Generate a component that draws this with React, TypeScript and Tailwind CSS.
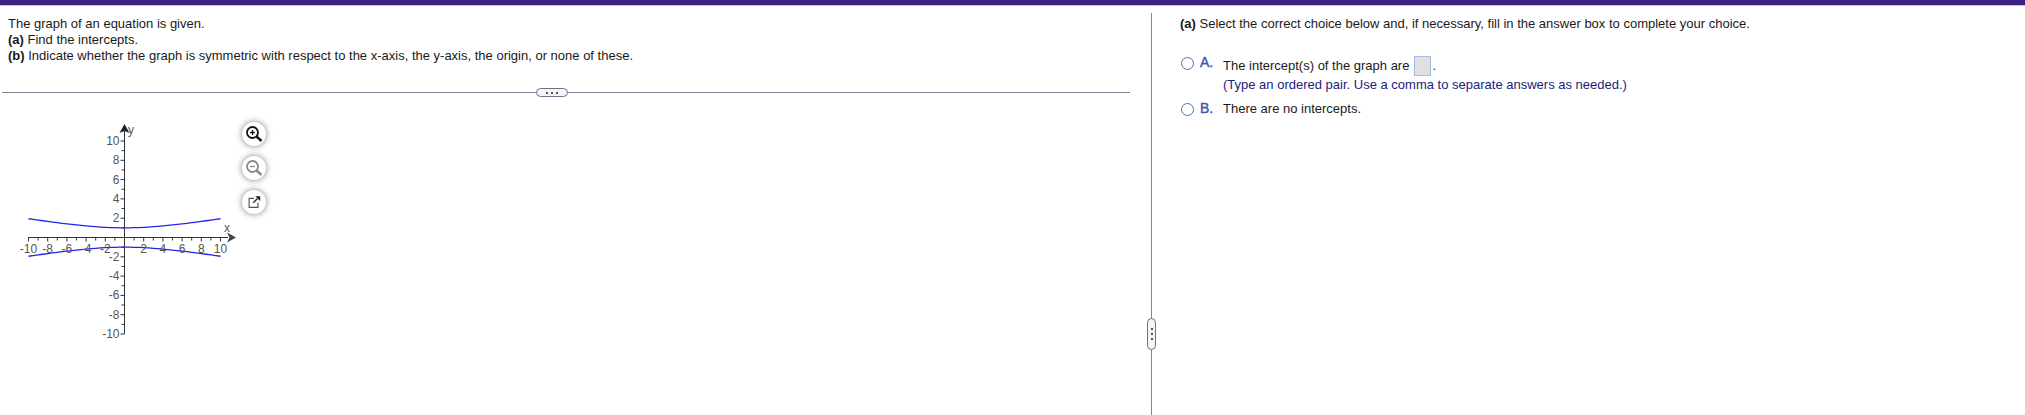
import React from 'react';

const xTicks = Array.from({ length: 21 }, (_, i) => i - 10);
const xLabels = [-10, -8, -6, -4, -2, 2, 4, 6, 8, 10];
const yLabels = [10, 8, 6, 4, 2, -2, -4, -6, -8, -10];

const cx = 124.5;
const cy = 128.5;
const unitX = 9.6;
const unitY = 9.65;

const curve = (sign: number) =>
  Array.from({ length: 41 }, (_, i) => {
    const x = -10 + i / 2;
    const y = sign * Math.sqrt(1 + (x * x) / 36);
    return `${cx + x * unitX},${cy - y * unitY}`;
  }).join(' ');

function Graph() {
  return (
    <svg width="240" height="240" viewBox="0 0 240 240" className="block">
      <g stroke="#333" strokeWidth="1">
        <line x1="28" y1={cy} x2="228" y2={cy} />
        <line x1={cx} y1="22" x2={cx} y2="225" />
        {xTicks.map((t) => (
          <line key={t} x1={cx + t * unitX} y1={cy} x2={cx + t * unitX} y2={cy + (t % 2 === 0 ? 4 : 3)} />
        ))}
        {xTicks.map((t) => (
          <line key={t} x1={cx - (t % 2 === 0 ? 4 : 3)} y1={cy - t * unitY} x2={cx} y2={cy - t * unitY} />
        ))}
      </g>
      <polygon points="236,128.5 227,123.5 229.5,128.5 227,133.5" fill="#444" />
      <polygon points="124.5,15 119.5,24 124.5,22 129.5,24" fill="#222" />
      <polyline points={curve(1)} fill="none" stroke="#2222ee" strokeWidth="1.3" />
      <polyline points={curve(-1)} fill="none" stroke="#2222ee" strokeWidth="1.3" />
      <g fontFamily="Liberation Sans, Arial, sans-serif" fontSize="12" fill="#555">
        {xLabels.map((t) => (
          <text key={t} x={cx + t * unitX} y={cy + 15} textAnchor="middle">
            {t}
          </text>
        ))}
        {yLabels.map((t) => (
          <text key={t} x={cx - 5} y={cy - t * unitY + 4} textAnchor="end">
            {t}
          </text>
        ))}
        <text x="227" y="123" textAnchor="middle">x</text>
        <text x="131" y="25" textAnchor="middle">y</text>
      </g>
    </svg>
  );
}

function ToolButton({ children }: { children: React.ReactNode }) {
  return (
    <button className="flex h-[24px] w-[24px] items-center justify-center rounded-full bg-white shadow-[0_0_6px_rgba(0,0,0,0.5)]">
      {children}
    </button>
  );
}

function ZoomIcon({ color, plus }: { color: string; plus?: boolean }) {
  return (
    <svg width="18" height="18" viewBox="0 0 18 18" fill="none" stroke={color}>
      <circle cx="7.5" cy="7.5" r="5.5" strokeWidth="1.8" />
      <line x1="11.5" y1="11.5" x2="16.5" y2="16" strokeWidth="2.4" />
      <line x1="5" y1="7.5" x2="10" y2="7.5" strokeWidth="1.3" />
      {plus && <line x1="7.5" y1="5" x2="7.5" y2="10" strokeWidth="1.3" />}
    </svg>
  );
}

function PopoutIcon() {
  return (
    <svg width="16" height="16" viewBox="0 0 18 18" fill="none">
      <path d="M9 5H3.5v10h10V9.5" stroke="#555" strokeWidth="1.3" />
      <line x1="8" y1="10" x2="13" y2="5" stroke="#222" strokeWidth="1.5" />
      <polygon points="10.5,2.5 16,2.5 16,8" fill="#222" />
    </svg>
  );
}

function Choice({ letter, children }: { letter: string; children: React.ReactNode }) {
  return (
    <div className="flex items-start">
      <span className="mt-[3px] h-[13px] w-[13px] rounded-full border-[1.5px] border-[#4f6fb8] bg-white" />
      <span className="ml-[6px] w-[23px] text-[14px] text-[#3f55b0] [-webkit-text-stroke:0.4px_#3f55b0]">{letter}</span>
      <div>{children}</div>
    </div>
  );
}

export default function App() {
  return (
    <div className="h-[415px] w-[2025px] overflow-hidden bg-white font-['Liberation_Sans',Arial,sans-serif] text-[13px] leading-[16px] text-[#1a1a1a]">
      <div className="h-[6px] border-b border-[#c9c3e3] bg-[#3b2080]" />

      <div className="flex h-[409px]">
        {/* Question pane */}
        <div className="w-[1130px] pt-[10px]">
          <div className="pl-[8px]">
            <p>The graph of an equation is given.</p>
            <p>
              <b>(a)</b> Find the intercepts.
            </p>
            <p>
              <b>(b)</b> Indicate whether the graph is symmetric with respect to the x-axis, the y-axis, the origin, or none of these.
            </p>
          </div>

          <div className="relative ml-[2px] mt-[28px] h-px bg-[#7f8796]">
            <div className="absolute left-[534px] top-[-4px] flex h-[9px] w-[32px] items-center justify-center gap-[3px] rounded-full border border-[#6b7585] bg-[#f3f5f8]">
              <span className="h-[2px] w-[2px] bg-[#555]" />
              <span className="h-[2px] w-[2px] bg-[#555]" />
              <span className="h-[2px] w-[2px] bg-[#555]" />
            </div>
          </div>

          <div className="mt-[16px] flex">
            <Graph />
            <div className="ml-[2px] mt-[13px] flex flex-col gap-[10px]">
              <ToolButton>
                <ZoomIcon color="#111" plus />
              </ToolButton>
              <ToolButton>
                <ZoomIcon color="#8a8a8a" />
              </ToolButton>
              <ToolButton>
                <PopoutIcon />
              </ToolButton>
            </div>
          </div>
        </div>

        {/* Divider */}
        <div className="relative ml-[21px] mt-[7px] w-px bg-[#7f8796]">
          <div className="absolute left-[-4px] top-[305px] flex h-[32px] w-[9px] flex-col items-center justify-center gap-[3px] rounded-full border border-[#6b7585] bg-[#f3f5f8]">
            <span className="h-[2px] w-[2px] bg-[#555]" />
            <span className="h-[2px] w-[2px] bg-[#555]" />
            <span className="h-[2px] w-[2px] bg-[#555]" />
          </div>
        </div>

        {/* Answer pane */}
        <div className="pl-[28px] pt-[10px]">
          <p>
            <b>(a)</b> Select the correct choice below and, if necessary, fill in the answer box to complete your choice.
          </p>
          <div className="ml-[1px] mt-[22px]">
            <Choice letter="A.">
              <div className="flex items-center pt-[2px]">
                <span>The intercept(s) of the graph are</span>
                <span className="ml-[5px] h-[20px] w-[17px] border-[1.5px] border-[#a4bbe8] bg-[#e0e0e0]" />
                <span className="ml-[1px]">.</span>
              </div>
              <p className="mt-[1px] text-[#1c1c7a]">(Type an ordered pair. Use a comma to separate answers as needed.)</p>
            </Choice>
          </div>
          <div className="ml-[1px] mt-[7px]">
            <Choice letter="B.">
              <p className="pt-[1px]">There are no intercepts.</p>
            </Choice>
          </div>
        </div>
      </div>
    </div>
  );
}
